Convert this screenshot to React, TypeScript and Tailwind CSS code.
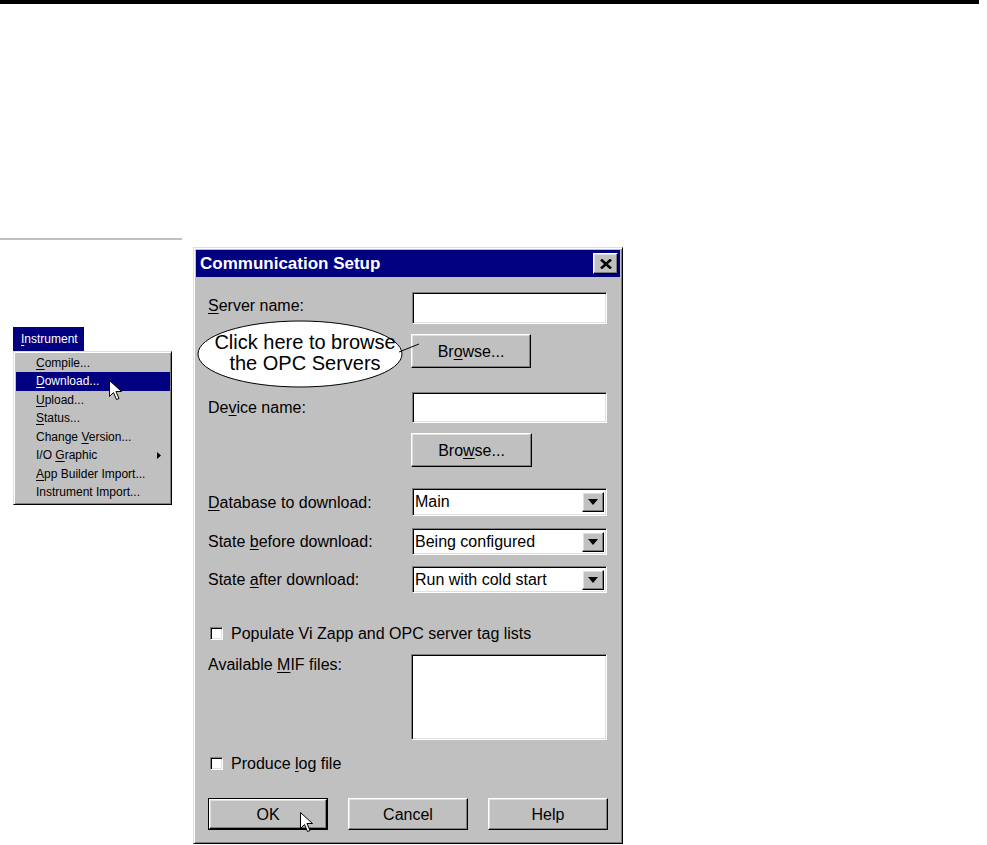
import React from "react";

const raised =
  "border border-t-white border-l-white border-r-black border-b-black shadow-[inset_-1px_-1px_0_#808080,inset_1px_1px_0_#dfdfdf]";
const sunken =
  "border border-t-[#808080] border-l-[#808080] border-r-white border-b-white shadow-[inset_1px_1px_0_#000,inset_-1px_-1px_0_#dfdfdf]";

function U({ children }: { children: React.ReactNode }) {
  return <span className="underline underline-offset-[2px] decoration-1">{children}</span>;
}

function Cursor() {
  return (
    <svg width="14" height="21" viewBox="0 0 14 21" className="block">
      <path
        d="M0.5 0.5 L0.5 16.5 L4.5 12.5 L7.5 19.5 L10 18.5 L7 11.5 L12.5 11.5 Z"
        fill="white"
        stroke="black"
        strokeWidth="1"
        strokeLinejoin="miter"
      />
    </svg>
  );
}

function MenuItem({
  children,
  active,
  arrow,
  cursor,
}: {
  children: React.ReactNode;
  active?: boolean;
  arrow?: boolean;
  cursor?: boolean;
}) {
  return (
    <div
      className={
        "relative h-[18.5px] flex items-center pl-[20px] text-[12px] leading-none " +
        (active ? "bg-[#000080] text-white" : "text-black")
      }
    >
      <span>{children}</span>
      {arrow && (
        <svg width="4" height="7" viewBox="0 0 4 7" className="absolute right-[9px] top-[6px]">
          <path d="M0 0 L4 3.5 L0 7 Z" fill="black" />
        </svg>
      )}
      {cursor && (
        <div className="absolute left-[93px] top-[8px]">
          <Cursor />
        </div>
      )}
    </div>
  );
}

function Select({ value }: { value: string }) {
  return (
    <div className={"w-[195px] h-full bg-white flex items-center justify-between " + sunken}>
      <span className="pl-[2px] text-[16px] leading-none text-black">{value}</span>
      <div className={"w-[22px] h-[20px] mr-[2px] bg-[#c0c0c0] flex items-center justify-center " + raised}>
        <svg width="10" height="6" viewBox="0 0 10 6">
          <path d="M0 0 L10 0 L5 6 Z" fill="black" />
        </svg>
      </div>
    </div>
  );
}

function Button({
  children,
  focus,
  w = 120,
  cursor,
}: {
  children: React.ReactNode;
  focus?: boolean;
  w?: number;
  cursor?: boolean;
}) {
  const width = w === 121 ? "w-[121px]" : "w-[120px]";
  if (focus) {
    return (
      <div className={"relative h-full border border-black " + width}>
        <div className={"w-full h-full bg-[#c0c0c0] flex items-center justify-center text-[16px] text-black " + raised}>
          {children}
        </div>
        {cursor && (
          <div className="absolute left-[91px] top-[13px]">
            <Cursor />
          </div>
        )}
      </div>
    );
  }
  return (
    <div className={"relative h-full bg-[#c0c0c0] flex items-center justify-center text-[16px] text-black " + width + " " + raised}>
      {children}
    </div>
  );
}

function Checkbox() {
  return <div className={"w-[13px] h-[13px] bg-white shrink-0 " + sunken} />;
}

export default function App() {
  return (
    <div className="w-[987px] h-[845px] bg-white overflow-hidden font-['Liberation_Sans',Arial,sans-serif]">
      <div className="h-[4px] w-[979px] bg-black" />
      <div className="mt-[234px] h-[2px] w-[182px] bg-[#c0c0c0]" />
      <div className="mt-[7px] flex">
        {/* Menu column */}
        <div className="w-[193px] shrink-0 pl-[13px] pt-[80px]">
          <div className="w-[71px] h-[24px] bg-[#000080] text-white text-[12px] leading-none pl-[8px] flex items-center">
            <span>
              <U>I</U>nstrument
            </span>
          </div>
          <div className="w-[159px] h-[154px] bg-[#c0c0c0] border border-t-[#dfdfdf] border-l-[#dfdfdf] border-r-black border-b-black shadow-[inset_1px_1px_0_#fff,inset_-1px_-1px_0_#808080] pt-[1.5px] pl-[2px] pr-[1px]">
            <MenuItem>
              <U>C</U>ompile...
            </MenuItem>
            <MenuItem active cursor>
              <U>D</U>ownload...
            </MenuItem>
            <MenuItem>
              <U>U</U>pload...
            </MenuItem>
            <MenuItem>
              <U>S</U>tatus...
            </MenuItem>
            <MenuItem>
              Change <U>V</U>ersion...
            </MenuItem>
            <MenuItem arrow>
              I/O <U>G</U>raphic
            </MenuItem>
            <MenuItem>
              <U>A</U>pp Builder Import...
            </MenuItem>
            <MenuItem>Instrument Import...</MenuItem>
          </div>
        </div>

        {/* Dialog */}
        <div className="relative w-[430px] h-[597px] shrink-0 bg-[#c0c0c0] border border-t-[#dfdfdf] border-l-[#dfdfdf] border-r-black border-b-black shadow-[inset_1px_1px_0_#fff,inset_-1px_-1px_0_#808080] p-[2px] flex flex-col">
          <div className="h-[27px] bg-[#000080] flex items-center justify-between pl-[4px] pr-[2px]">
            <span className="text-white font-bold text-[17px] leading-none">Communication Setup</span>
            <div className={"w-[25px] h-[21px] bg-[#c0c0c0] flex items-center justify-center " + raised}>
              <svg width="12" height="10" viewBox="0 0 12 10">
                <path d="M1 0.5 L11 9.5 M11 0.5 L1 9.5" stroke="black" strokeWidth="2.6" />
              </svg>
            </div>
          </div>

          <div className="flex flex-col pl-[12px] text-[16px] leading-[19px] text-black">
            <div className="mt-[15px] h-[32px] flex items-start">
              <div className="w-[204px] pt-[4px]">
                <U>S</U>erver name:
              </div>
              <div className={"w-[195px] h-full bg-white " + sunken} />
            </div>

            <div className="mt-[10px] h-[34px] flex pl-[203px]">
              <Button>
                Br<U>o</U>wse...
              </Button>
            </div>

            <div className="mt-[24px] h-[31px] flex items-center">
              <div className="w-[204px]">
                De<U>v</U>ice name:
              </div>
              <div className={"w-[195px] h-full bg-white " + sunken} />
            </div>

            <div className="mt-[10px] h-[34px] flex pl-[203px]">
              <Button w={121}>
                Bro<U>w</U>se...
              </Button>
            </div>

            <div className="mt-[21px] h-[28px] flex items-center">
              <div className="w-[204px]">
                <U>D</U>atabase to download:
              </div>
              <Select value="Main" />
            </div>

            <div className="mt-[12px] h-[27px] flex items-center">
              <div className="w-[204px]">
                State <U>b</U>efore download:
              </div>
              <Select value="Being configured" />
            </div>

            <div className="mt-[11px] h-[27px] flex items-center">
              <div className="w-[204px]">
                State <U>a</U>fter download:
              </div>
              <Select value="Run with cold start" />
            </div>

            <div className="mt-[34px] h-[13px] flex items-center pl-[2px] gap-[8px]">
              <Checkbox />
              <span>Populate Vi Zapp and OPC server tag lists</span>
            </div>

            <div className="mt-[14px] h-[86px] flex items-start">
              <div className="w-[203px] pt-[1px]">
                Available <U>M</U>IF files:
              </div>
              <div className={"w-[196px] h-full bg-white " + sunken} />
            </div>

            <div className="mt-[17px] h-[13px] flex items-center pl-[2px] gap-[8px]">
              <Checkbox />
              <span>
                Produce <U>l</U>og file
              </span>
            </div>

            <div className="mt-[28px] h-[32px] flex gap-[20px]">
              <Button focus cursor>
                OK
              </Button>
              <Button>Cancel</Button>
              <Button>Help</Button>
            </div>
          </div>

          {/* Callout balloon overlay */}
          <svg
            width="232"
            height="70"
            viewBox="0 0 232 70"
            className="absolute left-[2px] top-[72px] pointer-events-none"
          >
            <ellipse cx="104" cy="34" rx="102" ry="33" fill="white" stroke="black" strokeWidth="1" />
            <path d="M203 32 L223 24" stroke="black" strokeWidth="1" />
          </svg>
          <div className="absolute left-[8px] top-[84px] w-[206px] text-center text-[20px] leading-[21px] text-black pointer-events-none">
            Click here to browse
            <br />
            the OPC Servers
          </div>
        </div>
      </div>
    </div>
  );
}
